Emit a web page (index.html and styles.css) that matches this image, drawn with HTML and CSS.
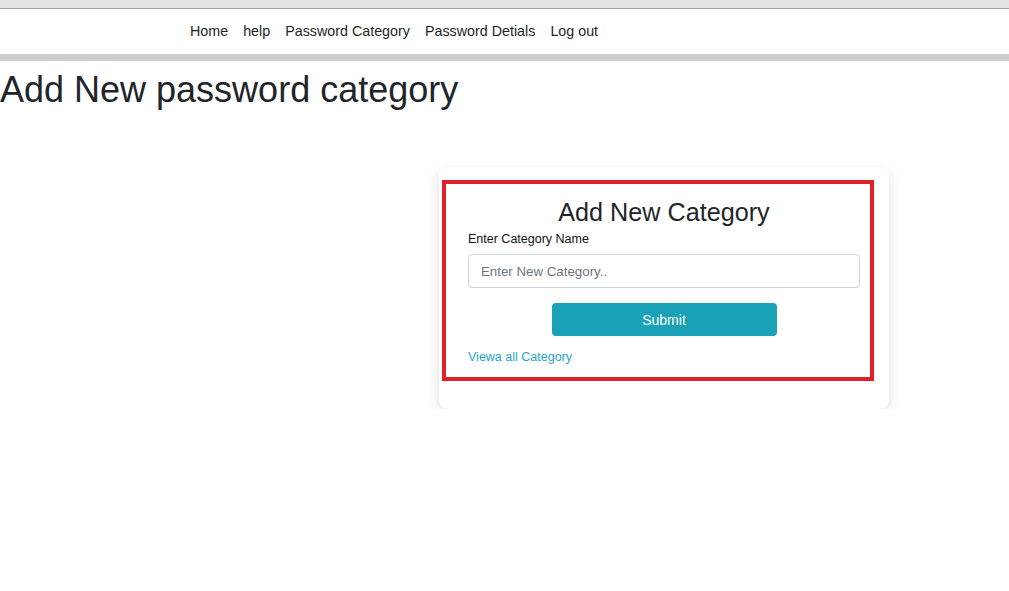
FILE: index.html
```html
<!DOCTYPE html>
<html lang="en">
<head>
<meta charset="utf-8">
<title>Add New password category</title>
<link rel="stylesheet" href="styles.css">
</head>
<body>
<div class="topstrip"></div>
<nav class="navbar">
  <a class="nav-link" href="#">Home</a>
  <a class="nav-link" href="#">help</a>
  <a class="nav-link" href="#">Password Category</a>
  <a class="nav-link" href="#">Password Detials</a>
  <a class="nav-link" href="#">Log out</a>
</nav>
<div class="navshadow"></div>
<h1 class="page-title">Add New password category</h1>
<div class="card">
  <form class="highlight">
    <h2 class="card-title">Add New Category</h2>
    <label class="field-label" for="cat">Enter Category Name</label>
    <input class="field-input" id="cat" type="text" placeholder="Enter New Category..">
    <div class="btn-row"><button class="btn-submit" type="button">Submit</button></div>
    <a class="view-link" href="#">Viewa all Category</a>
  </form>
</div>
</body>
</html>
```

FILE: styles.css
```css
html, body {
  margin: 0;
  padding: 0;
  background: #ffffff;
  font-family: "Liberation Sans", Arial, sans-serif;
  color: #212529;
}
.topstrip {
  height: 8px;
  background: #e3e3e3;
  border-bottom: 1px solid #a3a3a3;
}
.navbar {
  height: 45px;
  box-sizing: border-box;
  padding: 0 0 2px 190px;
  display: flex;
  align-items: center;
  gap: 15px;
  background: #ffffff;
}
.nav-link {
  font-size: 14.3px;
  color: #1f1f1f;
  text-decoration: none;
}
.navshadow {
  height: 7px;
  background: #cdcdcd;
}
.page-title {
  margin: 7px 0 0 0;
  font-size: 36px;
  font-weight: 400;
  line-height: 1.2;
  color: #212529;
}
.card {
  margin: 56px 0 0 439px;
  width: 450px;
  box-sizing: border-box;
  padding: 13px 15px 28px 3px;
  background: #ffffff;
  border-radius: 9px;
  box-shadow: 0 5px 14px rgba(0, 0, 0, 0.13);
}
.highlight {
  margin: 0;
  border: 4px solid #e2202a;
  padding: 14px 10px 11px 22px;
  display: flex;
  flex-direction: column;
}
.card-title {
  margin: 0;
  font-size: 25.2px;
  font-weight: 400;
  line-height: 28.8px;
  text-align: center;
  color: #212529;
}
.field-label {
  margin-top: 3px;
  font-size: 12.5px;
  line-height: 19.5px;
  color: #111;
}
.field-input {
  margin-top: 5px;
  height: 34px;
  box-sizing: border-box;
  border: 1px solid #ced4da;
  border-radius: 4px;
  padding: 0 12px;
  font-family: "Liberation Sans", Arial, sans-serif;
  font-size: 13.3px;
  color: #495057;
}
.field-input::placeholder {
  color: #6c757d;
}
.btn-row {
  margin-top: 15px;
  display: flex;
  justify-content: center;
}
.btn-submit {
  width: 225px;
  height: 33px;
  border: none;
  border-radius: 4px;
  background: #19a2b7;
  color: #ffffff;
  font-family: "Liberation Sans", Arial, sans-serif;
  font-size: 14px;
}
.view-link {
  margin-top: 12px;
  align-self: flex-start;
  font-size: 12.5px;
  line-height: 18px;
  color: #1fa6c9;
  text-decoration: none;
}
```
